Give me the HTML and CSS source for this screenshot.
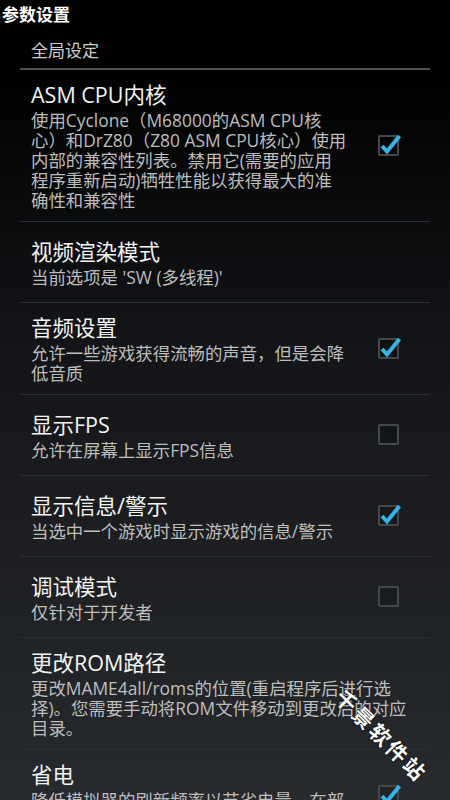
FILE: index.html
```html
<!DOCTYPE html>
<html lang="zh-CN">
<head>
  <meta charset="UTF-8">
  <meta name="viewport" content="width=device-width, initial-scale=1.0">
  <title>参数设置</title>
  <link rel="stylesheet" href="styles.css">
</head>
<body>
  <h1 class="app-title">参数设置</h1>
  <div class="prefs">
    <div class="category">全局设定</div>

    <div class="pref">
      <div class="pref-text">
        <div class="pref-title">ASM CPU内核</div>
        <div class="pref-summary">使用Cyclone（M68000的ASM CPU核<br>心）和DrZ80（Z80 ASM CPU核心）使用<br>内部的兼容性列表。禁用它(需要的应用<br>程序重新启动)牺牲性能以获得最大的准<br>确性和兼容性</div>
      </div>
      <div class="check">
        <span class="box"><svg class="tick" width="28" height="24" viewBox="0 0 28 24"><polyline points="4,11 9,16.5 21.5,1"/></svg></span>
      </div>
    </div>

    <div class="pref wide">
      <div class="pref-text">
        <div class="pref-title">视频渲染模式</div>
        <div class="pref-summary">当前选项是 'SW (多线程)'</div>
      </div>
    </div>

    <div class="pref">
      <div class="pref-text">
        <div class="pref-title">音频设置</div>
        <div class="pref-summary">允许一些游戏获得流畅的声音，但是会降低音质</div>
      </div>
      <div class="check">
        <span class="box"><svg class="tick" width="28" height="24" viewBox="0 0 28 24"><polyline points="4,11 9,16.5 21.5,1"/></svg></span>
      </div>
    </div>

    <div class="pref">
      <div class="pref-text">
        <div class="pref-title">显示FPS</div>
        <div class="pref-summary">允许在屏幕上显示FPS信息</div>
      </div>
      <div class="check"><span class="box"></span></div>
    </div>

    <div class="pref">
      <div class="pref-text">
        <div class="pref-title">显示信息/警示</div>
        <div class="pref-summary">当选中一个游戏时显示游戏的信息/警示</div>
      </div>
      <div class="check">
        <span class="box"><svg class="tick" width="28" height="24" viewBox="0 0 28 24"><polyline points="4,11 9,16.5 21.5,1"/></svg></span>
      </div>
    </div>

    <div class="pref">
      <div class="pref-text">
        <div class="pref-title">调试模式</div>
        <div class="pref-summary">仅针对于开发者</div>
      </div>
      <div class="check"><span class="box"></span></div>
    </div>

    <div class="pref wide">
      <div class="pref-text">
        <div class="pref-title">更改ROM路径</div>
        <div class="pref-summary">更改MAME4all/roms的位置(重启程序后进行选择)。您需要手动将ROM文件移动到更改后的对应目录。</div>
      </div>
    </div>

    <div class="pref">
      <div class="pref-text">
        <div class="pref-title">省电</div>
        <div class="pref-summary">降低模拟器的刷新频率以节省电量，在部分游戏中可能会影响流畅度</div>
      </div>
      <div class="check">
        <span class="box"><svg class="tick" width="28" height="24" viewBox="0 0 28 24"><polyline points="4,11 9,16.5 21.5,1"/></svg></span>
      </div>
    </div>
  </div>

  <div class="watermark">千景软件站</div>
</body>
</html>
```

FILE: styles.css
```css
body {
  margin: 0;
  width: 450px;
  height: 800px;
  overflow: hidden;
  position: relative;
  font-family: "Open Sans", "Noto Sans CJK SC", sans-serif;
  color: #f2f2f2;
  background: linear-gradient(#000 0, #000 70px, #121417 330px, #1d1f22 560px, #272a2e 800px);
}

.app-title {
  margin: 0;
  padding: 4px 2px;
  font-size: 17px;
  line-height: 22px;
  font-weight: bold;
  color: #fff;
}

.prefs {
  margin: 0 20px;
}

.category {
  padding: 9px 0 5px 11px;
  font-size: 17px;
  line-height: 24px;
  color: #cfcfcf;
  border-bottom: 2px solid #4f5256;
}

.pref {
  display: flex;
  align-items: center;
  min-height: 81px;
  box-sizing: border-box;
  padding: 10px 10px 11px 11px;
  border-bottom: 1px solid #2b2e32;
}

.pref.wide {
  padding-right: 18px;
}

.pref-text {
  flex: 1;
}

.pref-title {
  font-size: 21.5px;
  line-height: 30px;
  color: #f4f4f4;
}

.pref-summary {
  font-size: 17.4px;
  line-height: 20px;
  color: #bdbdbd;
}

.check {
  width: 64px;
  flex: none;
  display: flex;
  justify-content: center;
}

.box {
  position: relative;
  width: 17px;
  height: 17px;
  border: 2px solid #44484d;
  border-radius: 2px;
  background: rgba(0, 0, 0, 0.15);
}

.tick {
  position: absolute;
  left: -2px;
  top: -2px;
  overflow: visible;
}

.tick polyline {
  fill: none;
  stroke: #33b5e5;
  stroke-width: 4;
  stroke-linejoin: miter;
}

.watermark {
  position: absolute;
  left: 322px;
  top: 722px;
  width: 120px;
  font-family: "Noto Sans CJK SC", sans-serif;
  font-size: 21px;
  line-height: 26px;
  letter-spacing: 3px;
  font-weight: bold;
  color: #fff;
  text-shadow: 0 0 2px #000;
  transform: rotate(45deg);
  white-space: nowrap;
}
```
